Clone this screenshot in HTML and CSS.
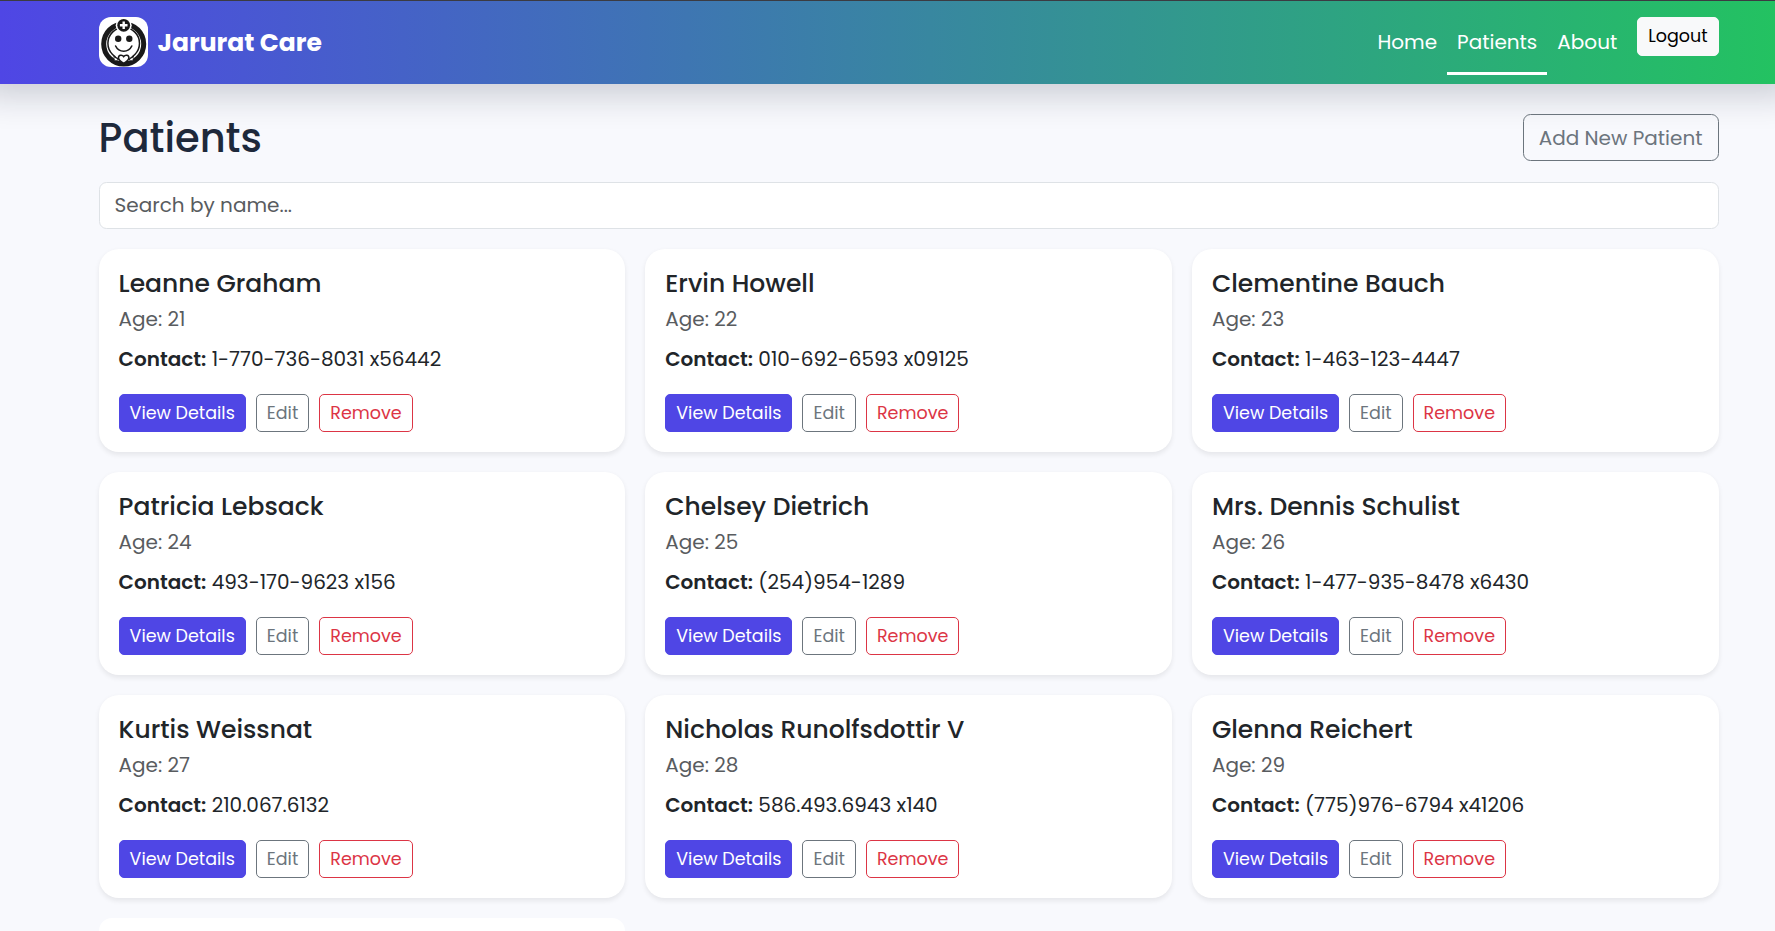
FILE: index.html
```
<!DOCTYPE html>
<html lang="en">
<head>
<meta charset="utf-8">
<title>Jarurat Care</title>
<link rel="stylesheet" href="styles.css">
</head>
<body>
<header class="navbar">
  <div class="container navbar-inner">
    <a class="brand">
      <svg class="logo" viewBox="0 0 49 50">
        <rect width="49" height="50" rx="12" fill="#fff"/>
        <circle cx="24.7" cy="27" r="20" fill="#fff" stroke="#191919" stroke-width="5"/>
        <circle cx="24.7" cy="26.3" r="15.8" fill="#fff" stroke="#191919" stroke-width="1.5"/>
        <circle cx="24.7" cy="8.3" r="8" fill="#fff"/>
        <circle cx="24.7" cy="8.3" r="6.4" fill="#191919"/>
        <path d="M24.7 4.5v7.6M20.9 8.3h7.6" stroke="#fff" stroke-width="2.4"/>
        <circle cx="19.2" cy="21.8" r="3.2" fill="#191919"/>
        <circle cx="30.3" cy="21.8" r="3.2" fill="#191919"/>
        <path d="M16.6 29c3.4 7 12.8 7 16.2 0" fill="none" stroke="#191919" stroke-width="1.6" stroke-linecap="round"/>
        <path d="M15.5 43.2h18.4l-2-6h-14.4z" fill="#fff"/>
        <path d="M14.5 39.5c2 .8 4.2 1.2 5 3.5M34.9 39.5c-2 .8-4.2 1.2-5 3.5" fill="none" stroke="#191919" stroke-width="1.4"/>
        <path d="M24.7 46.3c-3.2-1.9-5.2-3.7-5.2-5.6 0-2.9 3.7-3.4 5.2-1 1.5-2.4 5.2-1.9 5.2 1 0 1.9-2 3.7-5.2 5.6z" fill="#fff" stroke="#191919" stroke-width="1.5"/>
      </svg>
      <span class="brand-name">Jarurat Care</span>
    </a>
    <nav class="nav">
      <a class="nav-link">Home</a>
      <a class="nav-link active">Patients</a>
      <a class="nav-link">About</a>
      <button class="btn-sm logout">Logout</button>
    </nav>
  </div>
</header>
<main class="container">
  <div class="page-head">
    <h1 class="title">Patients</h1>
    <button class="add">Add New Patient</button>
  </div>
  <input class="search" placeholder="Search by name...">
  <div class="grid">
    <article class="card"><h2 class="name">Leanne Graham</h2><p class="age">Age: 21</p><p class="contact"><strong>Contact:</strong> 1-770-736-8031 x56442</p><div class="actions"><button class="btn-sm view">View Details</button><button class="btn-sm edit">Edit</button><button class="btn-sm remove">Remove</button></div></article>
    <article class="card"><h2 class="name">Ervin Howell</h2><p class="age">Age: 22</p><p class="contact"><strong>Contact:</strong> 010-692-6593 x09125</p><div class="actions"><button class="btn-sm view">View Details</button><button class="btn-sm edit">Edit</button><button class="btn-sm remove">Remove</button></div></article>
    <article class="card"><h2 class="name">Clementine Bauch</h2><p class="age">Age: 23</p><p class="contact"><strong>Contact:</strong> 1-463-123-4447</p><div class="actions"><button class="btn-sm view">View Details</button><button class="btn-sm edit">Edit</button><button class="btn-sm remove">Remove</button></div></article>
    <article class="card"><h2 class="name">Patricia Lebsack</h2><p class="age">Age: 24</p><p class="contact"><strong>Contact:</strong> 493-170-9623 x156</p><div class="actions"><button class="btn-sm view">View Details</button><button class="btn-sm edit">Edit</button><button class="btn-sm remove">Remove</button></div></article>
    <article class="card"><h2 class="name">Chelsey Dietrich</h2><p class="age">Age: 25</p><p class="contact"><strong>Contact:</strong> (254)954-1289</p><div class="actions"><button class="btn-sm view">View Details</button><button class="btn-sm edit">Edit</button><button class="btn-sm remove">Remove</button></div></article>
    <article class="card"><h2 class="name">Mrs. Dennis Schulist</h2><p class="age">Age: 26</p><p class="contact"><strong>Contact:</strong> 1-477-935-8478 x6430</p><div class="actions"><button class="btn-sm view">View Details</button><button class="btn-sm edit">Edit</button><button class="btn-sm remove">Remove</button></div></article>
    <article class="card"><h2 class="name">Kurtis Weissnat</h2><p class="age">Age: 27</p><p class="contact"><strong>Contact:</strong> 210.067.6132</p><div class="actions"><button class="btn-sm view">View Details</button><button class="btn-sm edit">Edit</button><button class="btn-sm remove">Remove</button></div></article>
    <article class="card"><h2 class="name">Nicholas Runolfsdottir V</h2><p class="age">Age: 28</p><p class="contact"><strong>Contact:</strong> 586.493.6943 x140</p><div class="actions"><button class="btn-sm view">View Details</button><button class="btn-sm edit">Edit</button><button class="btn-sm remove">Remove</button></div></article>
    <article class="card"><h2 class="name">Glenna Reichert</h2><p class="age">Age: 29</p><p class="contact"><strong>Contact:</strong> (775)976-6794 x41206</p><div class="actions"><button class="btn-sm view">View Details</button><button class="btn-sm edit">Edit</button><button class="btn-sm remove">Remove</button></div></article>
    <article class="card last"></article>
  </div>
</main>
</body>
</html>
```
FILE: styles.css
```
* { box-sizing: border-box; }
body {
  margin: 0;
  background: #f8f9fd;
  color: #212529;
  font-family: Poppins, Inter, sans-serif;
  font-size: 20px;
  font-weight: 400;
}
h1, h2, p { margin: 0; }
button, input { font: inherit; }
.container { width: 1620px; margin-left: 98.6px; }

.navbar {
  position: relative;
  height: 84px;
  border-top: 1px solid #3b3b42;
  background: linear-gradient(90deg, #4f46e5 0, #22c55e 1818px);
  box-shadow: 0 -8px 32px 20px rgba(15, 23, 42, .19);
}
.navbar-inner { display: flex; justify-content: space-between; padding-top: 16px; }
.brand { display: flex; align-items: center; gap: 10px; height: 50px; }
.logo { width: 49px; height: 50px; display: block; }
.brand-name { padding-top: 1.5px; font-size: 25px; font-weight: 700; color: #fff; }
.nav { display: flex; align-items: flex-start; }
.nav-link {
  height: 58px;
  padding: 0 10px;
  line-height: 50px;
  color: #fff;
  border-bottom: 3px solid transparent;
}
.nav-link.active { border-bottom-color: #fff; }

.btn-sm {
  height: 38px;
  padding: 0 10px;
  border: 1px solid;
  border-radius: 5px;
  background: transparent;
  font-size: 17.5px;
  line-height: 36px;
  text-align: center;
  white-space: nowrap;
}
.logout {
  height: 39px;
  margin-left: 10px;
  padding-bottom: 2px;
  border-color: #f8f9fa;
  background: #f8f9fa;
  color: #000;
}

.page-head { display: flex; justify-content: space-between; align-items: center; padding-top: 30px; height: 77px; position: relative; }
.title { padding-top: 1px; font-size: 40px; font-weight: 500; line-height: 48px; color: #1e293b; }
.add {
  width: 196px;
  height: 47px;
  padding: 1px 0 0;
  border: 1px solid #6c757d;
  border-radius: 7.5px;
  background: transparent;
  color: #6c757d;
}
.search {
  display: block;
  width: 100%;
  height: 47px;
  margin: 21px 0 20px;
  padding: 0 15px 1.5px;
  border: 1px solid #dee2e6;
  border-radius: 7.5px;
  background: #fff;
}
.search::placeholder { color: #595c5f; opacity: 1; }

.grid { display: grid; grid-template-columns: repeat(3, 1fr); gap: 20px; }
.card {
  height: 203px;
  padding: 20px;
  border-radius: 20px;
  background: #fff;
  box-shadow: 0 2.5px 5px rgba(0, 0, 0, .075);
}
.card.last { height: 13px; padding: 0; border-radius: 20px 20px 0 0; box-shadow: none; }
.name { height: 30px; font-size: 25px; font-weight: 500; line-height: 30px; }
.age { height: 30px; margin-top: 5px; line-height: 31px; color: #595c5f; }
.contact { height: 30px; margin-top: 10px; line-height: 31px; white-space: nowrap; }
.contact strong { font-weight: 600; }
.actions { display: flex; gap: 10px; margin-top: 20px; }
.view { border-color: #4f46e5; background: #4f46e5; color: #fff; }
.edit { border-color: #6c757d; color: #6c757d; }
.remove { border-color: #dc3545; color: #dc3545; }
```
